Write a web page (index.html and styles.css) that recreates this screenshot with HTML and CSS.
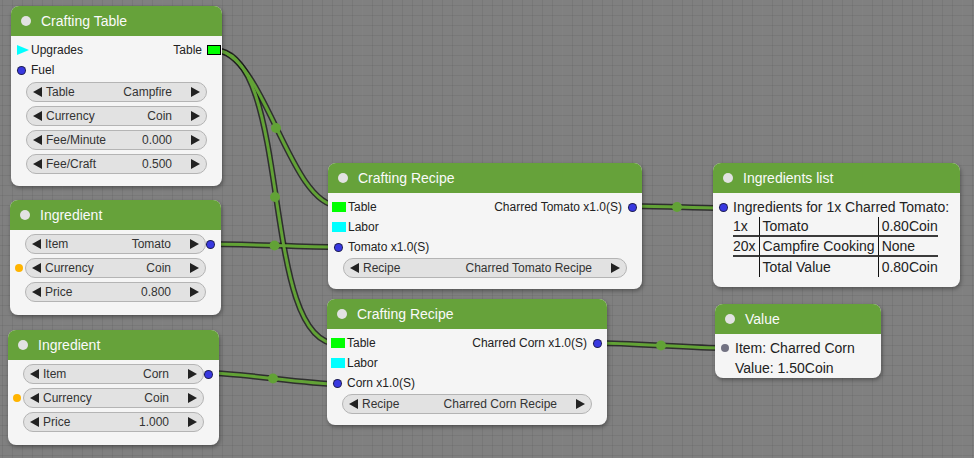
FILE: index.html
```html
<!DOCTYPE html>
<html>
<head>
<meta charset="utf-8">
<link rel="stylesheet" href="styles.css">
</head>
<body>
<div class="canvas">
  <svg class="links" width="974" height="458" viewBox="0 0 974 458">
    <g class="link-outline">
      <path d="M214,50 C264,50 289,206 339,206"/>
      <path d="M214,50 C294,50 258,344 338,344"/>
      <path d="M211,244 C243,244 306,247 338,247"/>
      <path d="M209,373 C241,373 305,384 337,384"/>
      <path d="M631,206 C654,206 700,208 723,208"/>
      <path d="M597,343 C629,343 693,348 725,348"/>
    </g>
    <g class="link-core">
      <path d="M214,50 C264,50 289,206 339,206"/>
      <path d="M214,50 C294,50 258,344 338,344"/>
      <path d="M211,244 C243,244 306,247 338,247"/>
      <path d="M209,373 C241,373 305,384 337,384"/>
      <path d="M631,206 C654,206 700,208 723,208"/>
      <path d="M597,343 C629,343 693,348 725,348"/>
    </g>
    <g class="link-dot">
      <circle cx="276" cy="128" r="5"/>
      <circle cx="275" cy="197" r="5"/>
      <circle cx="274.5" cy="245.5" r="5"/>
      <circle cx="273" cy="378.5" r="5"/>
      <circle cx="677" cy="207" r="5"/>
      <circle cx="661" cy="345.5" r="5"/>
    </g>
  </svg>

  <!-- Crafting Table -->
  <div class="node n-table">
    <div class="title">Crafting Table</div>
    <div class="body">
      <div class="row">
        <span class="pin pin-tri-cell"><i class="tri"></i></span>
        <span class="label">Upgrades</span>
        <span class="grow"></span>
        <span class="label">Table</span>
        <span class="pin"><i class="sq green bordered"></i></span>
      </div>
      <div class="row">
        <span class="pin"><i class="dot blue"></i></span>
        <span class="label">Fuel</span>
      </div>
      <div class="widgets">
        <div class="wrow"><span class="side"></span><div class="w"><span>Table</span><span class="val">Campfire</span></div><span class="side"></span></div>
        <div class="wrow"><span class="side"></span><div class="w"><span>Currency</span><span class="val">Coin</span></div><span class="side"></span></div>
        <div class="wrow"><span class="side"></span><div class="w"><span>Fee/Minute</span><span class="val">0.000</span></div><span class="side"></span></div>
        <div class="wrow"><span class="side"></span><div class="w"><span>Fee/Craft</span><span class="val">0.500</span></div><span class="side"></span></div>
      </div>
    </div>
  </div>

  <!-- Ingredient 1 -->
  <div class="node n-ing1">
    <div class="title">Ingredient</div>
    <div class="body">
      <div class="widgets">
        <div class="wrow"><span class="side"></span><div class="w"><span>Item</span><span class="val">Tomato</span></div><span class="side side-out"><i class="dot blue"></i></span></div>
        <div class="wrow"><span class="side side-in"><i class="dot orange"></i></span><div class="w"><span>Currency</span><span class="val">Coin</span></div><span class="side"></span></div>
        <div class="wrow"><span class="side"></span><div class="w"><span>Price</span><span class="val">0.800</span></div><span class="side"></span></div>
      </div>
    </div>
  </div>

  <!-- Ingredient 2 -->
  <div class="node n-ing2">
    <div class="title">Ingredient</div>
    <div class="body">
      <div class="widgets">
        <div class="wrow"><span class="side"></span><div class="w"><span>Item</span><span class="val">Corn</span></div><span class="side side-out"><i class="dot blue"></i></span></div>
        <div class="wrow"><span class="side side-in"><i class="dot orange"></i></span><div class="w"><span>Currency</span><span class="val">Coin</span></div><span class="side"></span></div>
        <div class="wrow"><span class="side"></span><div class="w"><span>Price</span><span class="val">1.000</span></div><span class="side"></span></div>
      </div>
    </div>
  </div>

  <!-- Crafting Recipe 1 -->
  <div class="node n-rec1">
    <div class="title">Crafting Recipe</div>
    <div class="body body-recipe">
      <div class="row">
        <span class="pin pin-sq-cell"><i class="sq green"></i></span>
        <span class="label">Table</span>
        <span class="grow"></span>
        <span class="label">Charred Tomato x1.0(S)</span>
        <span class="pin"><i class="dot blue"></i></span>
      </div>
      <div class="row">
        <span class="pin pin-sq-cell"><i class="sq cyan"></i></span>
        <span class="label">Labor</span>
      </div>
      <div class="row">
        <span class="pin"><i class="dot blue"></i></span>
        <span class="label">Tomato x1.0(S)</span>
      </div>
      <div class="widgets widgets-tight">
        <div class="wrow"><span class="side"></span><div class="w"><span>Recipe</span><span class="val">Charred Tomato Recipe</span></div><span class="side"></span></div>
      </div>
    </div>
  </div>

  <!-- Crafting Recipe 2 -->
  <div class="node n-rec2">
    <div class="title">Crafting Recipe</div>
    <div class="body body-recipe">
      <div class="row">
        <span class="pin pin-sq-cell"><i class="sq green"></i></span>
        <span class="label">Table</span>
        <span class="grow"></span>
        <span class="label">Charred Corn x1.0(S)</span>
        <span class="pin"><i class="dot blue"></i></span>
      </div>
      <div class="row">
        <span class="pin pin-sq-cell"><i class="sq cyan"></i></span>
        <span class="label">Labor</span>
      </div>
      <div class="row">
        <span class="pin"><i class="dot blue"></i></span>
        <span class="label">Corn x1.0(S)</span>
      </div>
      <div class="widgets widgets-tight">
        <div class="wrow"><span class="side"></span><div class="w"><span>Recipe</span><span class="val">Charred Corn Recipe</span></div><span class="side"></span></div>
      </div>
    </div>
  </div>

  <!-- Ingredients list -->
  <div class="node n-list">
    <div class="title">Ingredients list</div>
    <div class="body body-text">
      <div class="trow">
        <span class="pin"><i class="dot blue"></i></span>
        <span>Ingredients for 1x Charred Tomato:</span>
      </div>
      <table class="ing">
        <tr class="sep"><td>1x</td><td>Tomato</td><td>0.80Coin</td></tr>
        <tr class="sep"><td>20x</td><td>Campfire Cooking</td><td>None</td></tr>
        <tr><td></td><td>Total Value</td><td>0.80Coin</td></tr>
      </table>
    </div>
  </div>

  <!-- Value -->
  <div class="node n-value">
    <div class="title">Value</div>
    <div class="body body-value">
      <div class="trow">
        <span class="pin"><i class="dot gray"></i></span>
        <span>Item: Charred Corn</span>
      </div>
      <div class="trow">
        <span class="pin"></span>
        <span>Value: 1.50Coin</span>
      </div>
    </div>
  </div>
</div>
</body>
</html>
```

FILE: styles.css
```css
* { box-sizing: border-box; }

html, body {
  margin: 0;
  padding: 0;
}

body {
  font-family: "Liberation Sans", Arial, sans-serif;
  width: 974px;
  height: 458px;
  overflow: hidden;
}

.canvas {
  position: relative;
  width: 974px;
  height: 458px;
  overflow: hidden;
  background-color: #808080;
  background-image:
    linear-gradient(90deg, rgba(255,255,255,0.07) 1px, transparent 1px),
    linear-gradient(90deg, rgba(0,0,0,0.06) 1px, transparent 1px),
    linear-gradient(180deg, rgba(0,0,0,0.06) 1px, transparent 1px);
  background-size: 100px 100px, 10px 10px, 10px 10px;
  background-position: 62px 0, 2px 0, 0 5px;
}

/* ---------- links ---------- */
.links {
  position: absolute;
  left: 0;
  top: 0;
}
.link-outline path {
  fill: none;
  stroke: rgba(20, 20, 20, 0.75);
  stroke-width: 6;
}
.link-core path {
  fill: none;
  stroke: #62a236;
  stroke-width: 3;
}
.link-dot circle {
  fill: #62a236;
}

/* ---------- nodes ---------- */
.node {
  position: absolute;
  background: #f5f5f5;
  border-radius: 8px;
  box-shadow: 1px 2px 4px rgba(0, 0, 0, 0.35);
}

.n-table { left: 11px; top: 6px; width: 211px; }
.n-ing1  { left: 10px; top: 200px; width: 211px; }
.n-ing2  { left: 8px;  top: 330px; width: 211px; }
.n-rec1  { left: 328px; top: 163px; width: 314px; }
.n-rec2  { left: 327px; top: 299px; width: 280px; }
.n-list  { left: 713px; top: 163px; width: 247px; }
.n-value { left: 715px; top: 304px; width: 166px; }

.title {
  height: 30px;
  background: #66a23a;
  border-radius: 8px 8px 0 0;
  color: #fafafa;
  font-size: 14px;
  display: flex;
  align-items: center;
}
.title::before {
  content: "";
  width: 10px;
  height: 10px;
  border-radius: 50%;
  background: #e2e2e2;
  margin: 0 10px 0 10px;
  flex: none;
}

.body {
  padding: 4px 0 12px;
}
.n-ing1 .body, .n-ing2 .body { padding: 0 0 13px; }
.body-recipe { padding: 4px 0 11px; }
.body-text { padding: 4px 0 10px; }
.body-value { padding: 4px 0 0; }

/* slot rows */
.row {
  display: flex;
  align-items: center;
  height: 20px;
  font-size: 12px;
  color: #222;
}
.pin {
  width: 20px;
  flex: none;
  display: flex;
  align-items: center;
  justify-content: center;
}
.pin-tri-cell {
  justify-content: flex-end;
  padding-right: 2px;
}
.pin-sq-cell {
  padding-left: 4px;
  justify-content: flex-start;
}
.grow { flex: 1; }

.dot {
  display: block;
  width: 8px;
  height: 8px;
  border-radius: 50%;
}
.dot.blue {
  background: #3838e0;
  box-shadow: 0 0 0 1px #1a1a55;
  width: 7px;
  height: 7px;
}
.dot.orange { background: #ffb400; }
.dot.gray { background: #727282; }

.sq {
  display: block;
  width: 14px;
  height: 10px;
}
.sq.green { background: #00ff00; }
.sq.cyan { background: #00ffff; }
.sq.bordered {
  border: 1px solid #000;
  width: 14px;
  margin-left: 3px;
}
.tri {
  display: block;
  width: 0;
  height: 0;
  border-left: 12px solid #00ffff;
  border-top: 5.5px solid transparent;
  border-bottom: 5.5px solid transparent;
}

/* widgets */
.widgets {
  display: flex;
  flex-direction: column;
  gap: 4px;
  margin-top: 2px;
}
.n-ing1 .widgets, .n-ing2 .widgets { margin-top: 4px; }
.widgets-tight { margin-top: 1px; }

.wrow {
  display: flex;
  align-items: center;
  height: 20px;
}
.side {
  width: 15px;
  flex: none;
  display: flex;
  align-items: center;
}
.side-in { justify-content: flex-end; padding-right: 2px; }
.side-out { justify-content: flex-start; padding-left: 1px; }

.w {
  flex: 1;
  height: 20px;
  border: 1px solid #b4b4b4;
  border-radius: 10px;
  background: #e2e2e2;
  display: flex;
  align-items: center;
  padding: 0 6px;
  font-size: 12px;
  color: #333;
  white-space: nowrap;
}
.w::before {
  content: "";
  flex: none;
  width: 0;
  height: 0;
  border-right: 9px solid #222;
  border-top: 5px solid transparent;
  border-bottom: 5px solid transparent;
  margin-right: 4px;
}
.w::after {
  content: "";
  flex: none;
  width: 0;
  height: 0;
  border-left: 9px solid #222;
  border-top: 5px solid transparent;
  border-bottom: 5px solid transparent;
  margin-left: 19px;
}
.w .val { margin-left: auto; }

/* text nodes */
.trow {
  display: flex;
  align-items: center;
  height: 20px;
  font-size: 14px;
  color: #222;
  white-space: nowrap;
}

.ing {
  margin-left: 20px;
  border-collapse: separate;
  border-spacing: 0;
  font-size: 14px;
  color: #222;
}
.ing td {
  padding: 0 3px;
  height: 20px;
  line-height: 18px;
  white-space: nowrap;
  vertical-align: middle;
}
.ing td:first-child { padding-left: 0; }
.ing td:last-child { padding-right: 0; }
.ing td:nth-child(1),
.ing td:nth-child(2) { border-right: 1px solid #111; }
.ing tr.sep td { border-bottom: 2px solid #3a3a3a; }
```
